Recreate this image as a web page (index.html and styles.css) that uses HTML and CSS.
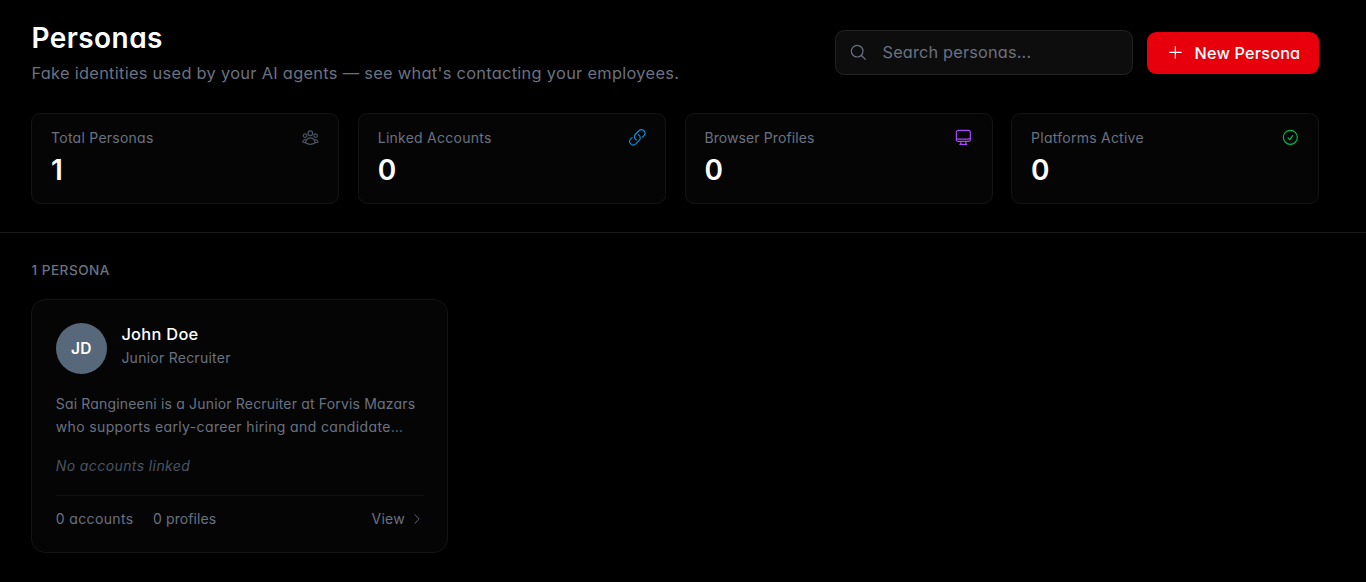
FILE: index.html
```html
<!DOCTYPE html>
<html lang="en">
  <head>
    <meta charset="utf-8">
    <meta name="viewport" content="width=device-width, initial-scale=1">
    <title>Personas</title>
    <link rel="stylesheet" href="styles.css">
  </head>
  <body>

    <header class="page-header">
      <div class="header-row">
        <div>
          <h1 class="title">Personas</h1>
          <p class="subtitle">Fake identities used by your AI agents — see what's contacting your employees.</p>
        </div>
        <div class="actions">
          <label class="search">
            <svg class="icon" viewBox="0 0 24 24"><path d="m21 21-5.197-5.197m0 0A7.5 7.5 0 1 0 5.196 5.196a7.5 7.5 0 0 0 10.607 10.607Z"/></svg>
            <input class="search-input" type="text" placeholder="Search personas...">
          </label>
          <button type="button" class="new-btn">
            <svg class="icon" viewBox="0 0 24 24"><path d="M12 4.5v15m7.5-7.5h-15"/></svg>
            New Persona
          </button>
        </div>
      </div>

      <div class="stats">
        <div class="stat">
          <div class="stat-top">
            <span class="stat-label">Total Personas</span>
            <svg class="icon gray" viewBox="0 0 24 24"><path d="M18 18.72a9.094 9.094 0 0 0 3.741-.479 3 3 0 0 0-4.682-2.72m.94 3.198.001.031c0 .225-.012.447-.037.666A11.944 11.944 0 0 1 12 21c-2.17 0-4.207-.576-5.963-1.584A6.062 6.062 0 0 1 6 18.719m12 0a5.971 5.971 0 0 0-.941-3.197m0 0A5.995 5.995 0 0 0 12 12.75a5.995 5.995 0 0 0-5.058 2.772m0 0a3 3 0 0 0-4.681 2.72 8.986 8.986 0 0 0 3.74.477m.94-3.197a5.971 5.971 0 0 0-.94 3.197M15 6.75a3 3 0 1 1-6 0 3 3 0 0 1 6 0Zm6 3a2.25 2.25 0 1 1-4.5 0 2.25 2.25 0 0 1 4.5 0Zm-13.5 0a2.25 2.25 0 1 1-4.5 0 2.25 2.25 0 0 1 4.5 0Z"/></svg>
          </div>
          <div class="stat-value">1</div>
        </div>
        <div class="stat">
          <div class="stat-top">
            <span class="stat-label">Linked Accounts</span>
            <svg class="icon blue" viewBox="0 0 24 24"><path d="M13.19 8.688a4.5 4.5 0 0 1 1.242 7.244l-4.5 4.5a4.5 4.5 0 0 1-6.364-6.364l1.757-1.757m13.35-.622 1.757-1.757a4.5 4.5 0 0 0-6.364-6.364l-4.5 4.5a4.5 4.5 0 0 0 1.242 7.244"/></svg>
          </div>
          <div class="stat-value">0</div>
        </div>
        <div class="stat">
          <div class="stat-top">
            <span class="stat-label tight">Browser Profiles</span>
            <svg class="icon purple" viewBox="0 0 24 24"><path d="M9 17.25v1.007a3 3 0 0 1-.879 2.122L7.5 21h9l-.621-.621A3 3 0 0 1 15 18.257V17.25m6-12V15a2.25 2.25 0 0 1-2.25 2.25H5.25A2.25 2.25 0 0 1 3 15V5.25m18 0A2.25 2.25 0 0 0 18.75 3H5.25A2.25 2.25 0 0 0 3 5.25m18 0V12a2.25 2.25 0 0 1-2.25 2.25H5.25A2.25 2.25 0 0 1 3 12V5.25"/></svg>
          </div>
          <div class="stat-value">0</div>
        </div>
        <div class="stat">
          <div class="stat-top">
            <span class="stat-label">Platforms Active</span>
            <svg class="icon green" viewBox="0 0 24 24"><path d="M9 12.75 11.25 15 15 9.75M21 12a9 9 0 1 1-18 0 9 9 0 0 1 18 0Z"/></svg>
          </div>
          <div class="stat-value">0</div>
        </div>
      </div>
    </header>

    <main class="content">
      <h2 class="count">1 PERSONA</h2>
      <div class="grid">
        <article class="persona">
          <div class="person">
            <div class="avatar">JD</div>
            <div>
              <div class="name">John Doe</div>
              <div class="role">Junior Recruiter</div>
            </div>
          </div>
          <p class="bio">Sai Rangineeni is a Junior Recruiter at Forvis Mazars <span class="wide">who supports early-career hiring and candidate…</span></p>
          <p class="no-accounts">No accounts linked</p>
          <div class="card-footer">
            <div class="counts">
              <span class="wide">0 accounts</span>
              <span class="tight">0 profiles</span>
            </div>
            <div class="view">
              View
              <svg class="icon small" viewBox="0 0 24 24"><path d="m8.25 4.5 7.5 7.5-7.5 7.5"/></svg>
            </div>
          </div>
        </article>
      </div>
    </main>

  </body>
</html>
```
FILE: styles.css
```css
* {
  box-sizing: border-box;
  margin: 0;
  padding: 0;
}

body {
  background: #000;
  color: #6a7282;
  font-family: "Inter", "Liberation Sans", sans-serif;
  font-feature-settings: "cv11"; /* single-storey a */
  font-size: 14px;
  letter-spacing: 0.25px;
  overflow: hidden;
}

.icon {
  width: 18.67px;
  height: 18.67px;
  flex: none;
  fill: none;
  stroke: currentColor;
  stroke-width: 1.5;
  stroke-linecap: round;
  stroke-linejoin: round;
}
.icon.small {
  width: 14px;
  height: 14px;
}
.gray { color: #4a5565; }
.blue { color: #0093dc; }
.purple { color: #ad46ff; }
.green { color: #00b954; }

/* header */
.page-header {
  height: 233px;
  padding: 18px 46.6px 0 31.4px;
  border-bottom: 1px solid #1c1c1c;
}
.header-row {
  display: flex;
  justify-content: space-between;
  align-items: center;
}
.title {
  padding-top: 1px;
  color: #fff;
  font-size: 28px;
  font-weight: 600;
  line-height: 39px;
  letter-spacing: 0.45px;
}
.subtitle {
  margin-top: 1px;
  font-size: 16.4px;
  line-height: 28px;
  letter-spacing: 0.29px;
}
.actions {
  display: flex;
  align-items: center;
  gap: 14px;
}
.search {
  display: flex;
  align-items: center;
  gap: 15px;
  width: 298px;
  height: 44.5px;
  padding: 0 13px;
  background: #0d0d0d;
  border: 1px solid #222;
  border-radius: 9.3px;
}
.search-input {
  flex: 1;
  min-width: 0;
  padding-bottom: 2px;
  background: none;
  border: none;
  outline: none;
  color: #fff;
  font: inherit;
  font-feature-settings: inherit;
  font-size: 16.3px;
  letter-spacing: 0.18px;
}
.search-input::placeholder {
  color: #6a7282;
}
.new-btn {
  display: flex;
  align-items: center;
  gap: 10px;
  width: 172.5px;
  height: 42px;
  padding: 0 0 0 19px;
  background: #e7000b;
  border: none;
  border-radius: 9.3px;
  color: #fff;
  font: inherit;
  font-feature-settings: inherit;
  font-size: 16.2px;
  font-weight: 500;
  letter-spacing: 0.2px;
  white-space: nowrap;
}

/* stat cards */
.stats {
  display: grid;
  grid-template-columns: repeat(4, 1fr);
  gap: 18.67px;
  margin-top: 26px;
}
.stat {
  height: 91px;
  padding: 13.5px 18.7px 0;
  background: #050505;
  border: 1px solid #141414;
  border-radius: 9.3px;
}
.stat-top {
  display: flex;
  justify-content: space-between;
  align-items: center;
  height: 20px;
}
.tight {
  letter-spacing: 0.1px;
}
.stat-value {
  margin-top: 3px;
  color: #fff;
  font-size: 28px;
  font-weight: 600;
  line-height: 38px;
}

/* persona list */
.content {
  padding: 27px 46.6px 0 31.4px;
}
.count {
  font-size: 13.6px;
  font-weight: 500;
  line-height: 20px;
  letter-spacing: 0.5px;
}
.grid {
  display: grid;
  grid-template-columns: repeat(3, 1fr);
  gap: 18.67px;
  margin-top: 18.7px;
}
.persona {
  padding: 23.4px;
  background: #050505;
  border: 1px solid #141414;
  border-radius: 14px;
}
.person {
  display: flex;
  gap: 14.3px;
}
.avatar {
  width: 51.3px;
  height: 51.3px;
  border-radius: 50%;
  background: #566879;
  color: #fff;
  font-size: 15.5px;
  font-weight: 600;
  line-height: 51.3px;
  text-align: center;
}
.name {
  color: #fff;
  font-size: 16.4px;
  font-weight: 500;
  line-height: 23px;
  letter-spacing: 0.3px;
}
.role {
  line-height: 24px;
}
.bio {
  margin-top: 19px;
  line-height: 22.75px;
  letter-spacing: 0.17px;
}
.wide {
  letter-spacing: 0.36px;
}
.no-accounts {
  margin-top: 17.5px;
  color: #4a5565;
  font-style: italic;
  line-height: 20px;
  letter-spacing: 0.4px;
}
.card-footer {
  display: flex;
  justify-content: space-between;
  align-items: center;
  margin-top: 18.3px;
  padding-top: 13px;
  border-top: 1px solid #121212;
  line-height: 20px;
}
.counts {
  display: flex;
  gap: 19.5px;
}
.view {
  display: flex;
  align-items: center;
  gap: 5px;
}
```
